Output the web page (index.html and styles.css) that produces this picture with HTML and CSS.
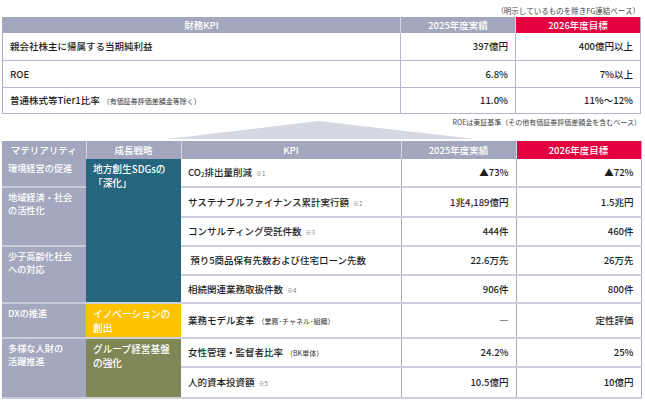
FILE: index.html
```html
<!DOCTYPE html>
<html lang="ja">
<head>
<meta charset="utf-8">
<title>KPI</title>
<link rel="stylesheet" href="styles.css">
</head>
<body>
<div class="page">
  <p class="note note-top">（明示しているものを除きFG連結ベース）</p>
  <table class="fin">
    <thead>
      <tr>
        <th class="c-label">財務KPI</th>
        <th class="c-act">2025年度実績</th>
        <th class="c-goal goal-head">2026年度目標</th>
      </tr>
    </thead>
    <tbody>
      <tr><td class="lbl">親会社株主に帰属する当期純利益</td><td class="num">397億円</td><td class="num">400億円以上</td></tr>
      <tr><td class="lbl">ROE</td><td class="num">6.8%</td><td class="num">7%以上</td></tr>
      <tr><td class="lbl">普通株式等Tier1比率<span class="paren">（有価証券評価差額金等除く）</span></td><td class="num">11.0%</td><td class="num">11%～12%</td></tr>
    </tbody>
  </table>
  <div class="bridge">
    <svg class="tri" width="645" height="27" viewBox="0 0 645 27" aria-hidden="true"><polygon points="318,7 475,25 167,25" fill="#d5d8e2"/></svg>
    <p class="note note-roe">ROEは東証基準（その他有価証券評価差額金を含むベース）</p>
  </div>
  <table class="kpi">
    <thead>
      <tr>
        <th class="k-mat">マテリアリティ</th>
        <th class="k-str">成長戦略</th>
        <th class="k-kpi">KPI</th>
        <th class="k-act">2025年度実績</th>
        <th class="k-goal goal-head">2026年度目標</th>
      </tr>
    </thead>
    <tbody>
      <tr class="r1">
        <td class="mat">環境経営の促進</td>
        <td class="str teal" rowspan="5">地方創生SDGsの<br>「深化」</td>
        <td class="item">CO<sub>2</sub>排出量削減<span class="ref">※1</span></td>
        <td class="num">▲73%</td><td class="num">▲72%</td>
      </tr>
      <tr class="r2">
        <td class="mat" rowspan="2">地域経済・社会<br>の活性化</td>
        <td class="item">サステナブルファイナンス累計実行額<span class="ref">※2</span></td>
        <td class="num">1兆4,189億円</td><td class="num">1.5兆円</td>
      </tr>
      <tr class="r3">
        <td class="item">コンサルティング受託件数<span class="ref">※3</span></td>
        <td class="num">444件</td><td class="num">460件</td>
      </tr>
      <tr class="r4">
        <td class="mat" rowspan="2">少子高齢化社会<br>への対応</td>
        <td class="item">&nbsp;預り5商品保有先数および住宅ローン先数</td>
        <td class="num">22.6万先</td><td class="num">26万先</td>
      </tr>
      <tr class="r5">
        <td class="item">相続関連業務取扱件数<span class="ref">※4</span></td>
        <td class="num">906件</td><td class="num">800件</td>
      </tr>
      <tr class="r6">
        <td class="mat">DXの推進</td>
        <td class="str yellow">イノベーションの<br>創出</td>
        <td class="item">業務モデル変革<span class="paren">（業務･チャネル･組織）</span></td>
        <td class="num">―</td><td class="num">定性評価</td>
      </tr>
      <tr class="r7">
        <td class="mat" rowspan="2">多様な人財の<br>活躍推進</td>
        <td class="str olive" rowspan="2">グループ経営基盤<br>の強化</td>
        <td class="item">女性管理・監督者比率<span class="paren">（BK単体）</span></td>
        <td class="num">24.2%</td><td class="num">25%</td>
      </tr>
      <tr class="r8">
        <td class="item">人的資本投資額<span class="ref">※5</span></td>
        <td class="num">10.5億円</td><td class="num">10億円</td>
      </tr>
    </tbody>
  </table>
</div>
</body>
</html>
```
FILE: styles.css
```css
* { box-sizing: border-box; }
html, body { margin: 0; padding: 0; background: #fff; }
body {
  font-family: "Noto Sans CJK JP", "Noto Sans", "Liberation Sans", sans-serif;
  color: #1e1e1e;
  width: 645px;
  height: 401px;
  overflow: hidden;
}
.page { padding: 0 4px 0 2px; }
.note {
  margin: 0;
  text-align: right;
  color: #444;
  white-space: nowrap;
}
.note-top {
  font-size: 7.5px;
  line-height: 10px;
  height: 17px;
  padding-top: 6px;
  padding-right: 1px;
}
table {
  border-collapse: collapse;
  table-layout: fixed;
}
th {
  background: #a3a7bd;
  color: #fff;
  font-weight: 500;
  font-size: 9.5px;
  text-align: center;
  padding: 0;
  border-right: 1px solid #d3d5e0;
}
th:last-child { border-right: 0; }
th.goal-head { background: #e4003f; }
td { padding: 0; }

/* financial KPI table */
.fin { width: 638px; border: 1px solid #a9acc1; border-top: 0; }
.fin .c-label { width: 398px; }
.fin .c-act { width: 115px; }
.fin .c-goal { width: 125px; }
.fin th { height: 16px; }
.fin td {
  height: 27px;
  font-size: 9.5px;
  font-weight: 500;
  border-bottom: 1px solid #b4b7c9;
  border-right: 1px solid #b4b7c9;
}
.fin tr:last-child td { height: 26px; }
.fin td.lbl { padding-left: 7px; }
td.num { text-align: right; padding-right: 7px; white-space: nowrap; }
.paren { font-size: 7px; font-weight: 400; color: #333; margin-left: 3px; }

/* bridge with triangle */
.bridge { position: relative; height: 27px; }
.tri { position: absolute; left: -2px; top: 0; }
.note-roe {
  position: relative;
  font-size: 7px;
  line-height: 9px;
  padding-top: 4px;
}

/* KPI table */
.kpi { width: 639px; border-right: 1px solid #a9acc1; }
.kpi .k-mat { width: 84px; }
.kpi .k-str { width: 95px; }
.kpi .k-kpi { width: 220px; }
.kpi .k-act { width: 115px; }
.kpi .k-goal { width: 125px; }
.kpi th { height: 18px; }
.kpi td {
  font-size: 9.5px;
  font-weight: 500;
  border-bottom: 2px solid #cdd0dc;
}
.kpi td.num { border-left: 1px solid #a9acc1; }
.kpi td.mat, .kpi td.str {
  vertical-align: top;
  color: #fff;
  padding: 3px 4px 0 6px;
}
.kpi td.mat {
  background: #a4a8be;
  border-bottom: 2px solid #c8cbd8;
  font-size: 9.2px;
  line-height: 13.4px;
}
.kpi td.str {
  padding-left: 7px;
  font-size: 9.7px;
  line-height: 14.1px;
}
.teal { background: #25657d; }
.yellow { background: #fdc300; }
.olive { background: #7f8756; }
.kpi td.item { padding-left: 7px; white-space: nowrap; }
.kpi td.item sub { font-size: 6px; vertical-align: -1px; }
.ref { font-size: 6px; font-weight: 400; color: #777; margin-left: 4px; }
.r1 td { height: 28px; }
.r2 td { height: 30px; }
.r3 td { height: 29px; }
.r4 td { height: 29px; }
.r5 td { height: 28px; }
.r6 td { height: 35px; }
.r7 td { height: 29px; }
.r8 td { height: 31px; }
```
